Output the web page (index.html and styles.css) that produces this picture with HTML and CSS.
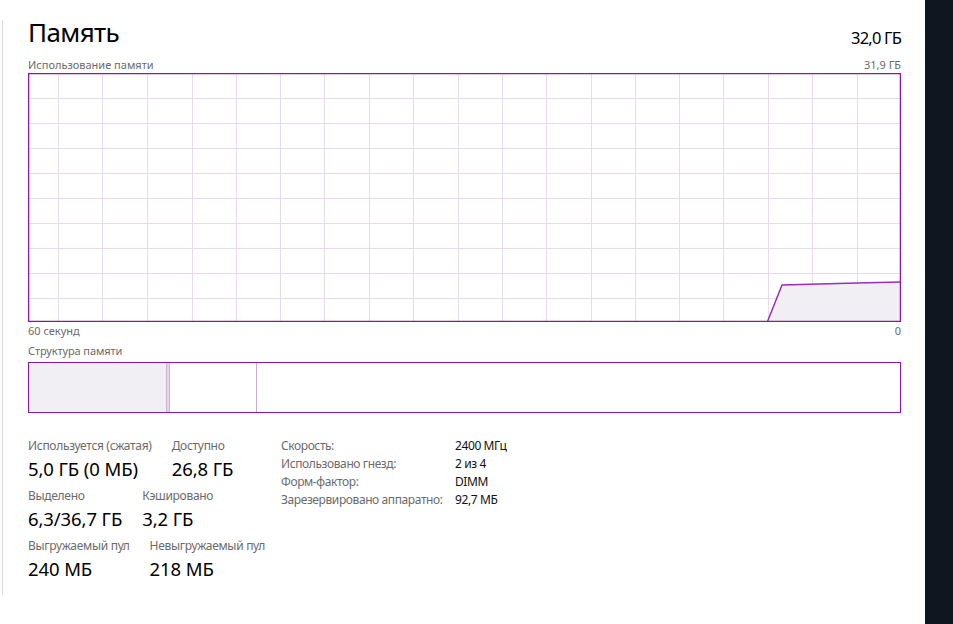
FILE: index.html
```html
<!DOCTYPE html>
<html lang="ru">
<head>
<meta charset="utf-8">
<title>Память</title>
<link rel="stylesheet" href="styles.css">
</head>
<body>
<div class="window">
  <div class="gutter"><div class="rule"></div></div>
  <main class="content">
    <header class="header">
      <h1 class="title">Память</h1>
      <div class="total">32,0 ГБ</div>
    </header>
    <div class="caption-row">
      <span>Использование памяти</span>
      <span>31,9 ГБ</span>
    </div>
    <div class="chart">
      <svg class="chart-svg" width="873" height="249" viewBox="0 0 873 249">
        <g class="grid">
          <line x1="30.5" y1="0" x2="30.5" y2="249"/>
          <line x1="74.5" y1="0" x2="74.5" y2="249"/>
          <line x1="119.5" y1="0" x2="119.5" y2="249"/>
          <line x1="164.5" y1="0" x2="164.5" y2="249"/>
          <line x1="208.5" y1="0" x2="208.5" y2="249"/>
          <line x1="252.5" y1="0" x2="252.5" y2="249"/>
          <line x1="296.5" y1="0" x2="296.5" y2="249"/>
          <line x1="341.5" y1="0" x2="341.5" y2="249"/>
          <line x1="385.5" y1="0" x2="385.5" y2="249"/>
          <line x1="430.5" y1="0" x2="430.5" y2="249"/>
          <line x1="474.5" y1="0" x2="474.5" y2="249"/>
          <line x1="518.5" y1="0" x2="518.5" y2="249"/>
          <line x1="563.5" y1="0" x2="563.5" y2="249"/>
          <line x1="607.5" y1="0" x2="607.5" y2="249"/>
          <line x1="651.5" y1="0" x2="651.5" y2="249"/>
          <line x1="695.5" y1="0" x2="695.5" y2="249"/>
          <line x1="740.5" y1="0" x2="740.5" y2="249"/>
          <line x1="784.5" y1="0" x2="784.5" y2="249"/>
          <line x1="829.5" y1="0" x2="829.5" y2="249"/>
          <line x1="0" y1="25.5" x2="873" y2="25.5"/>
          <line x1="0" y1="50.5" x2="873" y2="50.5"/>
          <line x1="0" y1="75.5" x2="873" y2="75.5"/>
          <line x1="0" y1="100.5" x2="873" y2="100.5"/>
          <line x1="0" y1="125.5" x2="873" y2="125.5"/>
          <line x1="0" y1="150.5" x2="873" y2="150.5"/>
          <line x1="0" y1="175.5" x2="873" y2="175.5"/>
          <line x1="0" y1="200.5" x2="873" y2="200.5"/>
          <line x1="0" y1="225.5" x2="873" y2="225.5"/>
        </g>
        <path class="area" d="M739.5 248 L754 212 L829 210 L873 209 L873 248 Z"/>
        <path class="line" d="M739.5 248.5 L754 212 L829 210 L873 209"/>
        <rect class="frame" x="0.5" y="0.5" width="872" height="248"/>
      </svg>
    </div>
    <div class="caption-row axis">
      <span>60 секунд</span>
      <span>0</span>
    </div>
    <div class="caption-row section">
      <span>Структура памяти</span>
    </div>
    <div class="composition">
      <div class="seg seg-used"></div>
      <div class="seg seg-modified"></div>
      <div class="seg seg-standby"></div>
      <div class="seg seg-free"></div>
    </div>
    <section class="stats">
      <div class="stats-main">
        <div class="stat-row">
          <div class="stat"><div class="stat-label">Используется (сжатая)</div><div class="stat-value">5,0 ГБ (0 МБ)</div></div>
          <div class="stat"><div class="stat-label">Доступно</div><div class="stat-value">26,8 ГБ</div></div>
        </div>
        <div class="stat-row">
          <div class="stat"><div class="stat-label">Выделено</div><div class="stat-value">6,3/36,7 ГБ</div></div>
          <div class="stat"><div class="stat-label">Кэшировано</div><div class="stat-value">3,2 ГБ</div></div>
        </div>
        <div class="stat-row">
          <div class="stat"><div class="stat-label">Выгружаемый пул</div><div class="stat-value">240 МБ</div></div>
          <div class="stat"><div class="stat-label">Невыгружаемый пул</div><div class="stat-value">218 МБ</div></div>
        </div>
      </div>
      <dl class="props">
        <dt>Скорость:</dt><dd>2400 МГц</dd>
        <dt>Использовано гнезд:</dt><dd>2 из 4</dd>
        <dt>Форм-фактор:</dt><dd>DIMM</dd>
        <dt>Зарезервировано аппаратно:</dt><dd>92,7 МБ</dd>
      </dl>
    </section>
  </main>
  <div class="spacer"></div>
  <aside class="dark"></aside>
</div>
</body>
</html>
```

FILE: styles.css
```css
html, body {
  margin: 0;
  padding: 0;
  background: #ffffff;
}
body {
  font-family: "Noto Sans", "Open Sans", "DejaVu Sans", sans-serif;
  color: #000;
}
.window {
  display: flex;
  width: 953px;
  height: 624px;
  overflow: hidden;
}
.gutter {
  flex: 0 0 28px;
  display: flex;
  flex-direction: column;
}
.rule {
  margin: 20px 0 0 2px;
  width: 1px;
  height: 575px;
  background: #dadada;
}
.content {
  flex: 0 0 873px;
  display: flex;
  flex-direction: column;
}
.spacer {
  flex: 0 0 24px;
}
.dark {
  flex: 1 1 auto;
  background: #0f1620;
}
.header {
  display: flex;
  justify-content: space-between;
  align-items: flex-start;
  padding-top: 16px;
  height: 38px;
}
.title {
  margin: 0;
  font-size: 26px;
  font-weight: 400;
  line-height: 32px;
  letter-spacing: -0.6px;
}
.total {
  font-size: 16.5px;
  line-height: 22px;
  margin-top: 11px;
  letter-spacing: -0.8px;
}
.caption-row {
  display: flex;
  justify-content: space-between;
  font-size: 11px;
  line-height: 14px;
  color: #6b6b6b;
  margin-top: 4px;
  margin-bottom: 1px;
}
.caption-row.axis {
  margin-top: 2px;
  margin-bottom: 0;
}
.caption-row.section {
  margin-top: 6px;
  margin-bottom: 4px;
  letter-spacing: -0.1px;
}
.chart {
  height: 249px;
}
.chart-svg {
  display: block;
}
.grid line {
  stroke: #e6dbea;
  stroke-width: 1;
}
.area {
  fill: #f1eff3;
}
.line {
  fill: none;
  stroke: #9531b8;
  stroke-width: 1.5;
}
.frame {
  fill: none;
  stroke: #8b15b3;
  stroke-width: 1.5;
}
.composition {
  display: flex;
  height: 51px;
  box-sizing: border-box;
  border: 1.5px solid #8b15b3;
}
.seg-used {
  flex: 0 0 137px;
  background: #f1eff3;
}
.seg-modified {
  flex: 0 0 2px;
  border-left: 1px solid #cdb3d8;
  border-right: 1px solid #cdb3d8;
  background: #e4d6ea;
}
.seg-standby {
  flex: 0 0 86px;
  border-right: 1px solid #c9acd5;
}
.seg-free {
  flex: 1 1 auto;
}
.stats {
  display: flex;
  margin-top: 25px;
}
.stats-main {
  flex: 0 0 253px;
  display: flex;
  flex-direction: column;
  gap: 8px;
}
.stat-row {
  display: flex;
  gap: 20px;
}
.stat-label {
  font-size: 12px;
  line-height: 16px;
  color: #6b6b6b;
  letter-spacing: -0.3px;
}
.stat-value {
  font-size: 18.5px;
  line-height: 22px;
  margin-top: 4px;
  color: #000;
  letter-spacing: -0.1px;
}
.props {
  margin: -1px 0 0 0;
  display: grid;
  grid-template-columns: 174px auto;
  font-size: 12px;
  line-height: 18px;
  letter-spacing: -0.4px;
  align-content: start;
}
.props dt {
  color: #6b6b6b;
}
.props dd {
  margin: 0;
  color: #111;
}
```
